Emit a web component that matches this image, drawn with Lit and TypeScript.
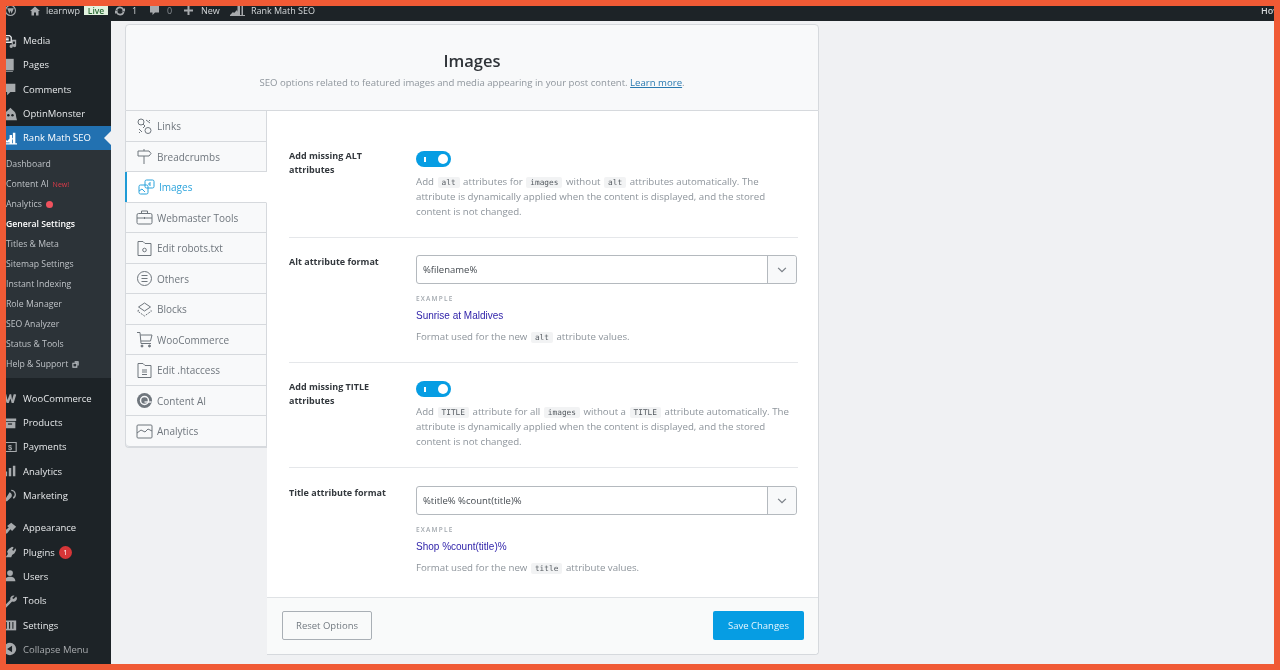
import { LitElement, html, css, svg } from "lit";
import { customElement } from "lit/decorators.js";

const sideIcons: Record<string, unknown> = {
  media: svg`<path d="M1 2h7l2 2v6H1zM3 5h4M3 7h4" fill="none" stroke="currentColor" stroke-width="1.6"/><path d="M11 7h5v7a2 2 0 1 1-1.5-2V9H12v6a2 2 0 1 1-1.5-2z"/>`,
  pages: svg`<path d="M3 1h10v14H3z"/><path d="M1 3h2v13h9v1.500H1z"/>`,
  comments: svg`<path d="M2 2h13v10H9l-4 4v-4H2z"/>`,
  optin: svg`<path d="M9 1l3 3c2 1 4 4 4 8l1 4H1l1-4c0-4 2-7 4-8z"/><circle cx="6.500" cy="10" r="1.500" fill="#1d2327"/><circle cx="11.500" cy="10" r="1.500" fill="#1d2327"/>`,
  rank: svg`<path d="M1 14l3-3 1 1 5-5 2 2-2 5zM8 15V5h3v10zM12 15V2h3v13zM2 15h15v1.500H2z"/>`,
  woo: svg`<path d="M0 4h4l1.500 7L8 4h2l1 7 2-7h2l1 .5-3 10h-2.500L9 9l-2 5.500H4.500z"/>`,
  products: svg`<path d="M1 3h15v3H1zM2 7h13v8H2z"/><path d="M6 9h5v1.500H6z" fill="#1d2327"/>`,
  payments: svg`<path d="M1 3h15v11H1z" fill="none" stroke="#a7aaad" stroke-width="1.400"/><text x="8.500" y="12" font-size="9" font-weight="700" text-anchor="middle" font-family="Liberation Sans">$</text>`,
  analytics: svg`<path d="M2 9h3v6H2zM7 5h3v10H7zM12 2h3v13h-3z"/>`,
  marketing: svg`<path d="M10 1a6 6 0 0 1 3 11l-1-2a4 4 0 0 0-2-7.500zM8 4a4 4 0 0 1 2 6L5 15H3v-3z"/>`,
  appearance: svg`<path d="M10 2l6 5-5 5-2-2-4 5-4 1 1-4 5-4-2-2z"/>`,
  plugins: svg`<path d="M11 2l2 1-2 3 2 1 2-3 1 2-2 4-3 2-1 3H3l3-4-1-3 2-3z"/>`,
  users: svg`<circle cx="8.500" cy="5" r="3.500"/><path d="M2 15c0-4 3-5.500 6.500-5.500S15 11 15 15z"/>`,
  tools: svg`<path d="M16 3l-3 3-2-1 3-3a4 4 0 0 0-5 5l-7 7 1.500 3L11 9a4 4 0 0 0 5-6z"/>`,
  settings: svg`<path d="M1 3h15v12H1z"/><path d="M4 5v8M8 5v8M12 5v8" stroke="#1d2327" stroke-width="1.300"/>`,
  collapse: svg`<circle cx="8.500" cy="8.500" r="7.500"/><path d="M11 4.500v8L5 8.500z" fill="#1d2327"/>`,
};

const tabIcons: Record<string, unknown> = {
  links: svg`<circle cx="5" cy="4" r="3"/><circle cx="12" cy="12.500" r="3"/><path d="M10 2l4 3M3 11l3 3M3 15l1-1M13 2l1 1M9 8l-2 2M7 6l2 2"/>`,
  crumbs: svg`<path d="M8 1v2M8 8v8M2 3h11l2 2.500L13 8H2z"/>`,
  images: svg`<rect x="7" y="1" width="9" height="8" rx="1.500"/><rect x="1" y="6" width="9" height="9" rx="1.500"/><path d="M1 12l3-2 3 3M10 5h2M12 3v4"/>`,
  web: svg`<rect x="1" y="4.500" width="15" height="10.500" rx="1.500"/><path d="M5.500 4.500V2h6v2.500M1 9h15M8.500 8v2"/>`,
  robots: svg`<path d="M2 1.500h5l2 2h6v12H2z"/><circle cx="8.500" cy="10" r="1.800"/>`,
  others: svg`<circle cx="8.500" cy="8.500" r="7"/><path d="M5.500 5.500h6M5.500 8.500h6M5.500 11.500h6"/>`,
  blocks: svg`<path d="M8.500 2l6 4-6 4-6-4z"/><path d="M3 9l-1.500 1 7 5 7-5L14 9" stroke-dasharray="2 1"/>`,
  woo: svg`<path d="M1 1.500h3l1 11h10M4.500 4h11.500l-1.500 6H5"/><circle cx="6" cy="15" r="1" fill="currentColor"/><circle cx="13.500" cy="15" r="1" fill="currentColor"/>`,
  htaccess: svg`<path d="M2 1.500h5l2 2h6v12H2z"/><path d="M6 8h5M6 10h5M6 12.500h5"/>`,
  ai: svg`<circle cx="8.500" cy="8.500" r="7.500" fill="currentColor" stroke="none"/><circle cx="8.500" cy="8.500" r="4" stroke="#f8f9fa" stroke-width="1.500"/><path d="M8.500 10h7" stroke="#f8f9fa" stroke-width="1.300"/>`,
  analytics: svg`<rect x="1" y="2" width="15" height="13" rx="1"/><path d="M1 10l4-3 4 2 3-3 4 2"/>`,
};

type Side = { t: string; i: string; badge?: boolean };
const top: Side[] = [
  { t: "Media", i: "media" },
  { t: "Pages", i: "pages" },
  { t: "Comments", i: "comments" },
  { t: "OptinMonster", i: "optin" },
];
const group2: Side[] = [
  { t: "WooCommerce", i: "woo" },
  { t: "Products", i: "products" },
  { t: "Payments", i: "payments" },
  { t: "Analytics", i: "analytics" },
  { t: "Marketing", i: "marketing" },
];
const group3: Side[] = [
  { t: "Appearance", i: "appearance" },
  { t: "Plugins", i: "plugins", badge: true },
  { t: "Users", i: "users" },
  { t: "Tools", i: "tools" },
  { t: "Settings", i: "settings" },
];
const subs = ["Titles & Meta", "Sitemap Settings", "Instant Indexing", "Role Manager", "SEO Analyzer", "Status & Tools"];
const tabs = [
  ["Links", "links"],
  ["Breadcrumbs", "crumbs"],
  ["Images", "images"],
  ["Webmaster Tools", "web"],
  ["Edit robots.txt", "robots"],
  ["Others", "others"],
  ["Blocks", "blocks"],
  ["WooCommerce", "woo"],
  ["Edit .htaccess", "htaccess"],
  ["Content AI", "ai"],
  ["Analytics", "analytics"],
];

@customElement("app-root")
export class AppRoot extends LitElement {
  static styles = css`
    :host { display: block; width: 1280px; height: 670px; overflow: hidden; }
    * { box-sizing: border-box; }
    .frame { width: 1280px; height: 670px; padding: 6px; background: #f05a35; }
    .screen { width: 1268px; height: 658px; overflow: hidden; background: #f0f1f3; display: flex; flex-direction: column; font-family: "Open Sans", "Noto Sans", sans-serif; filter: blur(0.3px); }

    .bar { height: 15px; flex: none; background: #1d2327; color: #d5d8da; font-size: 9px; line-height: 9px; display: flex; align-items: center; padding-bottom: 6px; overflow: hidden; }
    .bar svg { fill: #a7aaad; display: block; flex: none; }
    .wp { margin-left: -1px; }
    .home { margin-left: 14px; }
    .b-name { margin-left: 6px; width: 38px; }
    .live { width: 24px; height: 9px; background: #e3f3e0; color: #2a6a35; font-size: 8.500px; font-weight: 600; text-align: center; line-height: 9px; }
    .upd { margin-left: 6px; }
    .b-one { margin-left: 6px; width: 11px; }
    .b-cm { width: 11px; margin-left: 6px; }
    .b-zero { margin-left: 7px; width: 10px; color: #8a8f94; }
    .b-plus { margin-left: 6px; }
    .b-new { margin-left: 7px; width: 29px; }
    .b-rm { width: 64px; margin-left: 6px; white-space: nowrap; letter-spacing: -0.03px; }
    .how { margin-left: auto; font-weight: 600; width: 13px; overflow: hidden; white-space: nowrap; }

    .body { flex: 1; min-height: 0; display: flex; }
    .side { width: 105px; flex: none; background: #1d2327; padding-top: 7.400px; display: flex; flex-direction: column; overflow: hidden; position: relative; }
    .item { height: 24.330px; flex: none; display: flex; align-items: center; color: #e6e8ea; font-size: 9.500px; white-space: nowrap; }
    .item svg { width: 14px; height: 14px; margin-left: -3px; margin-right: 6px; fill: #a7aaad; flex: none; }
    .item.cur { background: #2271b1; color: #fff; }
    .item.cur svg { fill: #fff; }
    .item.muted { color: #a7aaad; }
    .notch { position: absolute; right: 0; top: 110px; width: 0; height: 0; border: 7px solid transparent; border-right-color: #f0f1f3; border-left: 0; }
    .sub { height: 228px; flex: none; background: #2c3338; padding: 4px 0 0; margin-bottom: 8px; display: flex; flex-direction: column; }
    .sub div { height: 20px; flex: none; display: flex; align-items: center; gap: 3px; color: #bfc3c7; font-size: 8.700px; white-space: nowrap; }
    .sub .on { color: #fff; font-weight: 600; }
    .new { color: #e33b4a; font-size: 7px; margin-left: 1px; }
    .dot { width: 7px; height: 7px; border-radius: 50%; background: #f0525e; margin-left: 1px; }
    .ext { width: 7px; height: 7px; fill: none; stroke: #bfc3c7; stroke-width: 1.200; margin-left: 1px; }
    .gap { height: 8px; flex: none; }
    .count { width: 13px; height: 13px; border-radius: 50%; background: #d63638; color: #fff; font-size: 7.500px; text-align: center; line-height: 13px; margin-left: 4px; }

    .main { flex: 1; padding: 3px 0 0 14px; min-width: 0; }
    .card { width: 694px; }
    .head { height: 87px; background: #f8f9fa; border: 1px solid #d6d9dd; border-radius: 4px 4px 0 0; display: flex; flex-direction: column; align-items: center; padding-top: 24px; }
    h1 { margin: 0; font-size: 16.500px; line-height: 24px; font-weight: 600; color: #2f3338; }
    .lead { margin-top: 3px; font-size: 9.600px; line-height: 14px; color: #8f969d; }
    .lead a { color: #2a7ab0; text-decoration: underline; }

    .split { display: flex; align-items: flex-start; }
    .tabs { width: 142px; flex: none; border: 1px solid #d6d9dd; border-top: 0; border-right: 0; border-radius: 0 0 0 4px; display: flex; flex-direction: column; }
    .tab { height: 30.500px; flex: none; background: #f8f9fa; border-bottom: 1px solid #d6d9dd; border-right: 1px solid #d6d9dd; display: flex; align-items: center; gap: 4px; padding: 1px 0 0 10px; color: #6f767d; font-size: 10px; }
    .tab:last-child { border-bottom-left-radius: 4px; }
    .tab svg { width: 17px; height: 17px; fill: none; stroke: currentColor; stroke-width: 1; flex: none; }
    .tab.on { background: #fff; color: #2ba3dc; border-right-color: #fff; box-shadow: inset 2px 0 0 #1f9bd6; margin-left: -1px; padding-left: 13px; }

    .panel { width: 552px; flex: none; border-right: 1px solid #d6d9dd; border-bottom: 1px solid #d6d9dd; border-radius: 0 0 4px 0; background: #fff; }
    .content { height: 486px; padding: 0 20px 0 22px; }
    .row { display: grid; grid-template-columns: 127px 1fr; border-bottom: 1px solid #e5e7ea; }
    .row:last-child { border-bottom: 0; }
    .r1 { height: 127px; padding-top: 40px; }
    .r2 { height: 125px; padding-top: 17px; }
    .r3 { height: 105px; padding-top: 18px; }
    .r4 { height: 129px; padding-top: 18px; }
    .label { font-size: 9px; line-height: 14px; font-weight: 700; color: #33383d; padding-right: 30px; }
    .r1 .label { margin-top: -2px; }
    .r3 .label { margin-top: -1px; }
    .toggle { width: 35px; height: 16px; border-radius: 8px; background: #069de3; position: relative; margin-bottom: 7px; }
    .toggle::before { content: ""; position: absolute; left: 8px; top: 5.500px; width: 1.500px; height: 5px; background: #fff; }
    .toggle::after { content: ""; position: absolute; right: 3px; top: 3px; width: 10px; height: 10px; border-radius: 50%; background: #fff; }
    .desc { font-size: 9.700px; line-height: 15px; color: #8d949b; margin: 0; }
    code { display: inline-block; font-family: "DejaVu Sans Mono", monospace; font-size: 7.800px; line-height: 11px; background: #f2f3f4; color: #555b61; padding: 0 4px; margin: 0 1px; border-radius: 2px; }
    .sel { height: 29px; width: 381px; border: 1px solid #b4b9be; border-radius: 3px; display: flex; align-items: stretch; }
    .sel span { flex: 1; padding-left: 6px; font-size: 9.500px; line-height: 27px; color: #444a50; }
    .sel b { width: 29px; background: #f8f9fa; border-left: 1px solid #b4b9be; display: flex; align-items: center; justify-content: center; border-radius: 0 3px 3px 0; }
    .sel svg { width: 10px; height: 6px; fill: none; stroke: #7b8188; stroke-width: 1.500; }
    .ex { font-size: 6.500px; font-weight: 600; letter-spacing: 1.200px; color: #a2a8ae; margin-top: 10px; line-height: 9px; }
    .exv { font-family: "Liberation Sans", sans-serif; font-size: 10px; line-height: 12px; color: #2b1ea8; margin-top: 7px; }
    .fmt { margin-top: 7px; }

    .foot { height: 57px; background: #f9fafa; border-top: 1px solid #dfe2e5; border-radius: 0 0 4px 0; display: flex; justify-content: space-between; align-items: flex-start; padding: 13px 14px 0 15px; }
    .btn { height: 29px; border-radius: 2px; font-size: 9.500px; display: flex; align-items: center; justify-content: center; }
    .reset { width: 90px; border: 1px solid #a9afb5; color: #737a81; }
    .save { width: 91px; background: #069de3; color: #e8f6fd; font-weight: 500; }
  `;

  private ico(map: Record<string, unknown>, k: string) {
    return html`<svg viewBox="0 0 17 17">${map[k]}</svg>`;
  }

  private item(s: Side) {
    return html`<div class="item">${this.ico(sideIcons, s.i)}${s.t}${s.badge ? html`<span class="count">1</span>` : ""}</div>`;
  }

  private sel(v: string) {
    return html`<div class="sel"><span>${v}</span><b><svg viewBox="0 0 11 7"><path d="M1 1l4.500 4.500L10 1"/></svg></b></div>`;
  }

  render() {
    return html`<div class="frame"><div class="screen">
      <div class="bar">
        <svg class="wp" width="11" height="11" viewBox="0 0 10 10"><circle cx="5" cy="5" r="4.500" fill="none" stroke="#a7aaad"/><path d="M2 3l2 5 1-3 1 3 2-5z"/></svg>
        <svg class="home" width="10" height="10" viewBox="0 0 10 10"><path d="M5 .5L10 5H8.500v4.500H6V6.500H4v3H1.500V5H0z"/></svg>
        <span class="b-name">learnwp</span>
        <span class="live">Live</span>
        <svg class="upd" width="12" height="12" viewBox="0 0 12 12"><path d="M6 1.500a4.500 4.500 0 0 1 4 2.500l1-1v3.500H7.500l1.200-1.200A3 3 0 0 0 3.200 5H1.600A4.500 4.500 0 0 1 6 1.500zM6 10.500A4.500 4.500 0 0 1 2 8l-1 1V5.500h3.500L3.300 6.700A3 3 0 0 0 8.800 7h1.600A4.500 4.500 0 0 1 6 10.500z"/></svg>
        <span class="b-one">1</span>
        <svg class="b-cm" width="11" height="11" viewBox="0 0 11 11"><path d="M1 1h9v6.500H6L3.500 10V7.500H1z"/></svg>
        <span class="b-zero">0</span>
        <svg class="b-plus" width="11" height="11" viewBox="0 0 11 11"><path d="M4.500 1h2v3.500H10v2H6.500V10h-2V6.500H1v-2h3.500z"/></svg>
        <span class="b-new">New</span>
        <svg width="15" height="11" viewBox="0 0 15 11"><path d="M0 10l3-3 1 1 3-3 .5 2V1H10v9h1.500V0H13v10h2v1H0z"/></svg>
        <span class="b-rm">Rank Math SEO</span>
        <span class="how">Howdy</span>
      </div>
      <div class="body">
        <nav class="side">
          ${top.map((s) => this.item(s))}
          <div class="item cur">${this.ico(sideIcons, "rank")}Rank Math SEO</div>
          <div class="notch"></div>
          <div class="sub">
            <div>Dashboard</div>
            <div>Content AI <span class="new">New!</span></div>
            <div>Analytics <span class="dot"></span></div>
            <div class="on">General Settings</div>
            ${subs.map((t) => html`<div>${t}</div>`)}
            <div>Help &amp; Support <svg class="ext" viewBox="0 0 8 8"><path d="M1 2.500h4.500V7H1zM3 1h4v4"/></svg></div>
          </div>
          ${group2.map((s) => this.item(s))}
          <div class="gap"></div>
          ${group3.map((s) => this.item(s))}
          <div class="item muted">${this.ico(sideIcons, "collapse")}Collapse Menu</div>
        </nav>
        <main class="main">
          <div class="card">
            <header class="head">
              <h1>Images</h1>
              <div class="lead">SEO options related to featured images and media appearing in your post content. <a>Learn more</a>.</div>
            </header>
            <div class="split">
              <div class="tabs">
                ${tabs.map(([t, i]) => html`<div class="tab ${t === "Images" ? "on" : ""}">${this.ico(tabIcons, i)}${t}</div>`)}
              </div>
              <section class="panel">
                <div class="content">
                  <div class="row r1">
                    <div class="label">Add missing ALT attributes</div>
                    <div>
                      <div class="toggle"></div>
                      <p class="desc">Add <code>alt</code> attributes for <code>images</code> without <code>alt</code> attributes automatically. The attribute is dynamically applied when the content is displayed, and the stored content is not changed.</p>
                    </div>
                  </div>
                  <div class="row r2">
                    <div class="label">Alt attribute format</div>
                    <div>
                      ${this.sel("%filename%")}
                      <div class="ex">EXAMPLE</div>
                      <div class="exv">Sunrise at Maldives</div>
                      <p class="desc fmt">Format used for the new <code>alt</code> attribute values.</p>
                    </div>
                  </div>
                  <div class="row r3">
                    <div class="label">Add missing TITLE attributes</div>
                    <div>
                      <div class="toggle"></div>
                      <p class="desc">Add <code>TITLE</code> attribute for all <code>images</code> without a <code>TITLE</code> attribute automatically. The attribute is dynamically applied when the content is displayed, and the stored content is not changed.</p>
                    </div>
                  </div>
                  <div class="row r4">
                    <div class="label">Title attribute format</div>
                    <div>
                      ${this.sel("%title% %count(title)%")}
                      <div class="ex">EXAMPLE</div>
                      <div class="exv">Shop %count(title)%</div>
                      <p class="desc fmt">Format used for the new <code>title</code> attribute values.</p>
                    </div>
                  </div>
                </div>
                <footer class="foot">
                  <div class="btn reset">Reset Options</div>
                  <div class="btn save">Save Changes</div>
                </footer>
              </section>
            </div>
          </div>
        </main>
      </div>
    </div></div>`;
  }
}
